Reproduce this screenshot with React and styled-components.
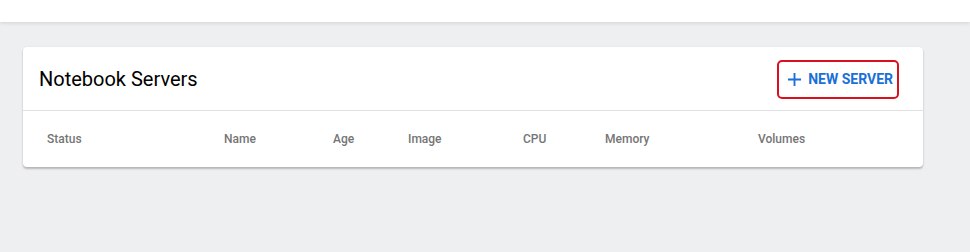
import React from 'react'
import styled, { createGlobalStyle } from 'styled-components'

const GlobalStyle = createGlobalStyle`
  html, body {
    margin: 0;
    padding: 0;
    background: #eeeff1;
    font-family: Roboto, "Liberation Sans", sans-serif;
  }
`

const TopBar = styled.header`
  height: 22px;
  background: #ffffff;
  box-shadow: 0 1px 4px rgba(0, 0, 0, 0.12);
  position: relative;
  z-index: 1;
`

const Page = styled.main`
  padding: 25px 47px 40px 23px;
`

const Card = styled.section`
  background: #ffffff;
  border-radius: 4px;
  box-shadow: 0 2px 2px rgba(0, 0, 0, 0.22), 0 0 2px rgba(0, 0, 0, 0.08);
  overflow: hidden;
`

const CardHeader = styled.div`
  display: flex;
  align-items: center;
  justify-content: space-between;
  height: 63px;
  padding: 0 24px 0 16px;
  border-bottom: 1px solid #e0e0e0;
`

const Title = styled.h1`
  margin: 0;
  font-size: 20px;
  font-weight: 400;
  color: #000000;
  padding-top: 1px;
`

const NewButton = styled.button`
  display: flex;
  align-items: center;
  gap: 6px;
  height: 39px;
  padding: 0 4px 0 8px;
  border: 2.5px solid #d9111f;
  border-radius: 5px;
  background: #ffffff;
  color: #1a6fd8;
  font-family: inherit;
  font-size: 14px;
  font-weight: 700;
  cursor: pointer;
  margin-top: 1px;

  svg {
    width: 15px;
    height: 15px;
  }
`

const HeadRow = styled.div`
  display: grid;
  grid-template-columns: 177px 109px 75px 115px 82px 153px 1fr;
  align-items: center;
  height: 56px;
  padding: 0 24px;
`

const HeadCell = styled.div`
  font-size: 12px;
  font-weight: 500;
  color: #757575;
`

const columns = ['Status', 'Name', 'Age', 'Image', 'CPU', 'Memory', 'Volumes']

const PlusIcon = () => (
  <svg viewBox="0 0 16 16" fill="none" stroke="currentColor" strokeWidth="2">
    <path d="M8 1v14M1 8h14" />
  </svg>
)

export default function App() {
  return (
    <>
      <GlobalStyle />
      <TopBar />
      <Page>
        <Card>
          <CardHeader>
            <Title>Notebook Servers</Title>
            <NewButton>
              <PlusIcon />
              NEW SERVER
            </NewButton>
          </CardHeader>
          <HeadRow>
            {columns.map((c) => (
              <HeadCell key={c}>{c}</HeadCell>
            ))}
          </HeadRow>
        </Card>
      </Page>
    </>
  )
}
